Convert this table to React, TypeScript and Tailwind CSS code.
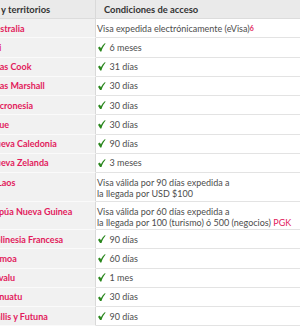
import React from 'react';

type Row = {
  name: string;
  shift: string;
  lines: React.ReactNode[];
  check?: boolean;
};

const PINK = 'text-[#e21b5c]';

const rows: Row[] = [
  {
    name: 'Australia',
    shift: '-ml-[11px]',
    lines: [
      <>
        Visa expedida electrónicamente (eVisa)
        <sup className={`${PINK} text-[7px] relative -top-[1px] font-bold`}>6</sup>
      </>,
    ],
  },
  { name: 'Fiyi', shift: '-ml-[13px]', check: true, lines: ['6 meses'] },
  { name: 'Islas Cook', shift: '-ml-[9px]', check: true, lines: ['31 días'] },
  { name: 'Islas Marshall', shift: '-ml-[9px]', check: true, lines: ['30 días'] },
  { name: 'Micronesia', shift: '-ml-[11px]', check: true, lines: ['30 días'] },
  { name: 'Niue', shift: '-ml-[10px]', check: true, lines: ['30 días'] },
  { name: 'Nueva Caledonia', shift: '-ml-[11px]', check: true, lines: ['90 días'] },
  { name: 'Nueva Zelanda', shift: '-ml-[11px]', check: true, lines: ['3 meses'] },
  {
    name: 'Laos',
    shift: '-ml-[3px]',
    lines: ['Visa válida por 90 días expedida a', 'la llegada por USD $100'],
  },
  {
    name: 'Papúa Nueva Guinea',
    shift: '-ml-[11px]',
    lines: [
      'Visa válida por 60 días expedida a',
      <>
        la llegada por 100 (turismo) ó 500 (negocios) <span className={PINK}>PGK</span>
      </>,
    ],
  },
  { name: 'Polinesia Francesa', shift: '-ml-[10px]', check: true, lines: ['90 días'] },
  { name: 'Samoa', shift: '-ml-[10px]', check: true, lines: ['60 días'] },
  { name: 'Tuvalu', shift: '-ml-[11px]', check: true, lines: ['1 mes'] },
  { name: 'Vanuatu', shift: '-ml-[11px]', check: true, lines: ['30 días'] },
  { name: 'Wallis y Futuna', shift: '-ml-[13px]', check: true, lines: ['90 días'] },
];

// heavy green tick, thick short stroke on the left
function Check() {
  return (
    <svg viewBox="0 0 8 9" className="w-[7.5px] h-[8.5px] mr-[4px] ml-[1px] shrink-0">
      <path d="M0 4.9 L1.9 3.6 L3.1 5.5 C4.3 3.4 5.8 1.5 7.5 0 L8 0.7 C6.3 2.6 4.7 5.3 3.6 8.9 L2.4 8.9 Z" fill="#2a871d" />
    </svg>
  );
}

function TableRow({ row }: { row: Row }) {
  const tall = row.lines.length > 1;
  return (
    <div className={`flex ${tall ? 'h-[28.5px]' : 'h-[19.25px]'}`}>
      <div
        className={`w-[96px] shrink-0 overflow-hidden whitespace-nowrap bg-[#f1f1f1] border-r border-[#d9d9d9] border-b border-b-[#fafafa] flex ${
          tall ? 'items-start pt-[4px]' : 'items-center'
        }`}
      >
        <span className={`${row.shift} font-bold ${PINK}`}>{row.name}</span>
      </div>
      <div
        className={`flex-1 whitespace-nowrap border-b border-[#e3e3e3] pl-[1px] flex ${
          tall ? 'flex-col pt-[4px]' : 'items-center'
        }`}
      >
        {row.check && <Check />}
        {row.lines.map((l, i) => (
          <span key={i}>{l}</span>
        ))}
      </div>
    </div>
  );
}

export default function App() {
  return (
    <div className="w-[300px] h-[330px] overflow-hidden bg-white text-[9px] leading-[11px] text-[#4d4d4d] [font-family:Lato,'Liberation_Sans',sans-serif]">
      <div className="flex h-[19px] bg-[#eaeaea] border-b border-[#dcdcdc] font-bold text-[#333] text-[9.4px]">
        <div className="w-[96px] shrink-0 overflow-hidden whitespace-nowrap border-r border-[#d9d9d9] flex items-center">
          <span className="-ml-[27px]">Países y territorios</span>
        </div>
        <div className="flex-1 flex items-center pl-[8px]">Condiciones de acceso</div>
      </div>
      {rows.map((r) => (
        <TableRow key={r.name} row={r} />
      ))}
    </div>
  );
}
